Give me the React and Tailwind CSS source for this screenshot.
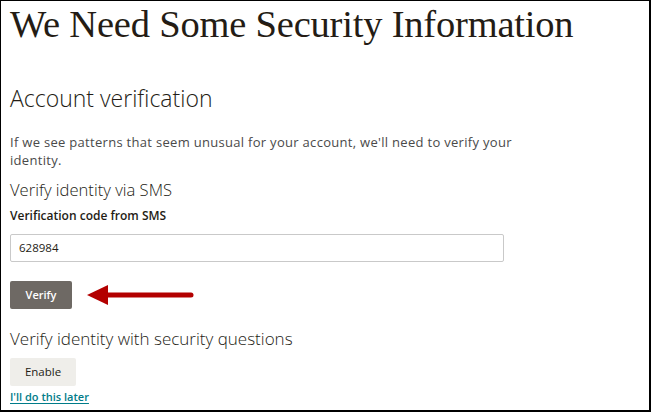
export default function App() {
  return (
    <div className="w-[651px] h-[412px] bg-white">
      <div className="w-full h-full border-t border-l border-r-2 border-b-2 border-black pl-[9px] font-['Open_Sans',sans-serif] text-[#241c15]">
        <h1 className="font-['Liberation_Serif',serif] text-[38.5px] leading-[44px] pt-[1px] tracking-[-0.2px]">
          We Need Some Security Information
        </h1>

        <h2 className="mt-[37px] text-[23px] leading-[30px] font-light">Account verification</h2>

        <p className="mt-[20px] w-[520px] text-[13px] leading-[18px] tracking-[0.3px] text-[#4a4a4a]">
          If we see patterns that seem unusual for your account, we'll need to verify your identity.
        </p>

        <h3 className="mt-[9px] text-[16.6px] leading-[24px] font-light">Verify identity via SMS</h3>

        <label className="block mt-[6px] text-[12px] leading-[16px] font-semibold">Verification code from SMS</label>

        <div className="mt-[10px] w-[494px] h-[28px] border border-[#c9c9c9] rounded-[2px] flex items-center px-[8px] text-[11.5px] text-[#241c15]">
          628984
        </div>

        <div className="mt-[19px] flex items-center">
          <button className="w-[62px] h-[28px] bg-[#6e6964] rounded-[2px] text-white text-[11px] font-semibold">
            Verify
          </button>
          <svg width="110" height="26" viewBox="0 0 110 26" className="ml-[14px]">
            <path d="M1 13 L22 3 L22 23 Z" fill="#b30000" />
            <line x1="20" y1="13" x2="105" y2="13" stroke="#b30000" strokeWidth="5" strokeLinecap="round" />
          </svg>
        </div>

        <h3 className="mt-[18px] text-[17px] leading-[24px] font-light">Verify identity with security questions</h3>

        <button className="mt-[7px] w-[66px] h-[28px] bg-[#efeeea] rounded-[2px] text-[11.5px] font-medium text-[#241c15]">
          Enable
        </button>

        <div className="mt-[1px] leading-[16px]">
          <a className="text-[11px] leading-[16px] font-semibold text-[#007c89] underline underline-offset-2">
            I'll do this later
          </a>
        </div>
      </div>
    </div>
  );
}
